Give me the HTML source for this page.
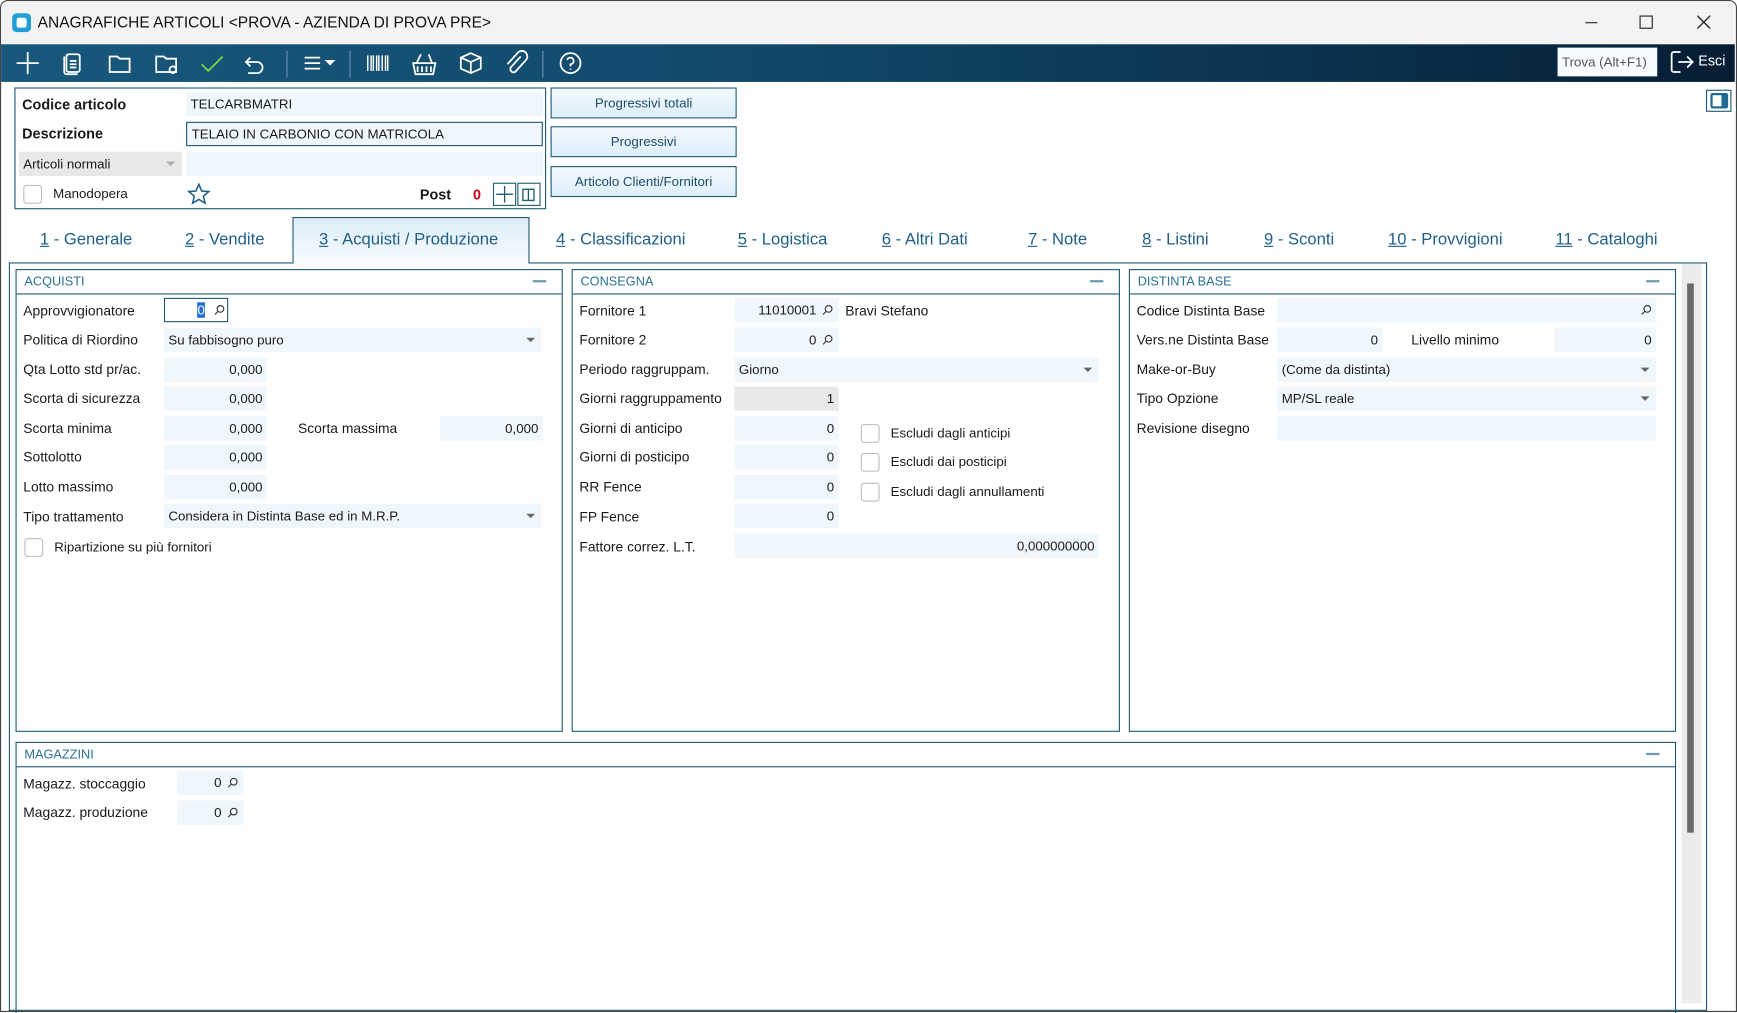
<!DOCTYPE html>
<html><head><meta charset="utf-8">
<style>
html,body{margin:0;padding:0;width:1737px;height:1012px;overflow:hidden;background:#fff;}
#w{position:absolute;left:0;top:0;width:1568px;height:914px;transform:scale(1.10778,1.10722);transform-origin:0 0;font-family:"Liberation Sans",sans-serif;color:#1a1a1a;font-size:13px;}
.a{position:absolute;}
.f{position:absolute;background:#eff7fc;height:22px;font-size:12px;line-height:22px;box-sizing:border-box;padding:0 4px;}
.r{text-align:right;}
.lbl{position:absolute;font-size:12.5px;line-height:16px;}
.pan{position:absolute;border:1px solid #1e5a73;box-sizing:border-box;}
.ph{position:absolute;left:0;right:0;top:0;height:21px;border-bottom:1px solid #1e5a73;color:#2a7196;font-size:11.5px;line-height:22px;padding-left:7px;}
.ph:after{content:"";position:absolute;right:14px;top:9px;width:12px;height:1.5px;background:#6a9ab5;}
.cb{position:absolute;width:15px;height:15px;border:1px solid #bdbdbd;border-radius:3px;background:#fff;}
.dd{position:absolute;right:6px;top:9px;width:0;height:0;border-left:4px solid transparent;border-right:4px solid transparent;border-top:4px solid #666;}
.btn{position:absolute;left:497px;width:168px;height:28px;box-sizing:border-box;border:1px solid #1e5a73;background:linear-gradient(#f4fafe,#dceefa);font-size:12px;color:#1e4d6b;text-align:center;line-height:26px;}
.tab{position:absolute;top:208px;font-size:15px;color:#1f5f8a;}
.tab u{text-decoration:underline;}
</style></head><body><div id="w">
<div class="a" style="left:0;top:0;width:1566px;height:912px;border:1px solid #444;border-radius:7px 7px 0 0;"></div>
<div class="a" style="left:1px;top:1px;width:1565px;height:39px;background:#f3f3f3;border-radius:7px 7px 0 0;"></div>
<div class="a" style="left:11px;top:12px;width:17px;height:17px;background:#1f9fd8;border-radius:4px;"></div>
<div class="a" style="left:15px;top:16px;width:9px;height:9px;background:#fff;border-radius:2px;"></div>
<div class="a" style="left:34px;top:12px;font-size:14px;color:#111;">ANAGRAFICHE ARTICOLI &lt;PROVA - AZIENDA DI PROVA PRE&gt;</div>
<div class="a" style="left:1431px;top:20px;width:11px;height:1px;background:#222;"></div>
<div class="a" style="left:1480px;top:14px;width:10px;height:10px;border:1px solid #222;"></div>
<svg class="a" style="left:1532px;top:14px" width="12" height="12"><path d="M0 0L12 12M12 0L0 12" stroke="#222" stroke-width="1.2"/></svg>
<div class="a" style="left:1px;top:40px;width:1565px;height:34px;background:linear-gradient(90deg,#17587c 0%,#124a6c 40%,#0a3350 75%,#071d33 100%);"></div>
<svg class="a" style="left:0;top:40px" width="540" height="34" fill="none" stroke="#fff" stroke-width="1.6">
<path d="M25 7V27M15 17H35"/>
<rect x="60" y="9" width="12" height="16" rx="2"/><path d="M58 11v14a2 2 0 0 0 2 2h10M63 15h6M63 18h6M63 21h6"/>
<path d="M99 11h7l2 2h9v12H99z"/>
<path d="M141 11h7l2 2h9v12h-18z"/><circle cx="156" cy="23" r="3"/>
<path d="M182 18l6 6 13-13" stroke="#7cd44a"/>
<path d="M226 12l-4 4 4 4M222 16h10a5 5 0 0 1 0 10h-8"/>
<path d="M259 6v24M316 6v24M490 6v24" stroke="#4d7c99"/>
<path d="M275 12h14M275 17h14M275 22h14"/><path d="M295 15l3 3 3-3z" fill="#fff"/>
<path d="M332 10v14M335 10v14M337 10v14M340 10v14M342 10v14M345 10v14M348 10v14M350 10v14" stroke-width="1.3"/>
<path d="M373 17h20l-2 10h-16zM376 17l4-8M390 17l-3-8M377 20v5M381 20v5M385 20v5M389 20v5"/>
<path d="M425 8l9 4v10l-9 4-9-4V12zM416 12l9 4 9-4M425 16v10"/>
<path d="M470 11l-9 10a3 3 0 0 0 4 4l10-11a5 5 0 0 0-7-7l-10 11"/>
<circle cx="515" cy="17" r="9"/><path d="M512 14a3 3 0 1 1 3 4v2M515 22v1"/>
</svg>
<div class="a" style="left:1406px;top:43px;width:90px;height:26px;background:#f7fbfe;font-size:12px;color:#555;line-height:26px;padding-left:4px;box-sizing:border-box;">Trova (Alt+F1)</div>
<svg class="a" style="left:1507px;top:45px" width="24" height="24" fill="none" stroke="#fff" stroke-width="1.6"><path d="M10 2H4a2 2 0 0 0-2 2v14a2 2 0 0 0 2 2h6M8 11h13M16 6l5 5-5 5"/></svg>
<div class="a" style="left:1533px;top:47px;font-size:13px;color:#fff;">Esci</div>
<div class="a" style="left:13px;top:79px;width:480px;height:110px;border:1px solid #1e5a73;box-sizing:border-box;"></div>
<div class="a" style="left:20px;top:87px;font-weight:bold;font-size:13px;">Codice articolo</div>
<div class="f" style="left:168px;top:83px;width:322px;">TELCARBMATRI</div>
<div class="a" style="left:20px;top:113px;font-weight:bold;font-size:13px;">Descrizione</div>
<div class="f" style="left:168px;top:110px;width:322px;border:1px solid #1e5a73;line-height:20px;">TELAIO IN CARBONIO CON MATRICOLA</div>
<div class="f" style="left:17px;top:137px;width:147px;background:#e8e8e8;">Articoli normali<span class="dd" style="border-top-color:#aaa"></span></div>
<div class="f" style="left:168px;top:137px;width:322px;"></div>
<div class="cb" style="left:21px;top:167px;"></div>
<div class="a" style="left:48px;top:168px;font-size:12px;">Manodopera</div>
<svg class="a" style="left:169px;top:165px" width="21" height="20"><path d="M10.5 1.5l2.6 6 6.4.5-4.9 4.2 1.5 6.3-5.6-3.4-5.6 3.4 1.5-6.3L1.5 8l6.4-.5z" fill="none" stroke="#1f5f8a" stroke-width="1.4"/></svg>
<div class="a" style="left:379px;top:168px;font-weight:bold;font-size:13px;">Post</div>
<div class="a" style="left:427px;top:168px;font-weight:bold;font-size:13px;color:#d0021b;">0</div>
<div class="a" style="left:445px;top:165px;width:21px;height:21px;border:1px solid #1e5a73;box-sizing:border-box;"></div>
<div class="a" style="left:467px;top:165px;width:21px;height:21px;border:1px solid #1e5a73;box-sizing:border-box;"></div>
<svg class="a" style="left:445px;top:165px" width="44" height="21" fill="none" stroke="#1e5a73" stroke-width="1.2"><path d="M10.5 3v15M3 10.5h15"/><path d="M27 6h5v10h-5zM32 6h5v10h-5z"/></svg>
<div class="btn" style="top:79px;">Progressivi totali</div>
<div class="btn" style="top:114px;">Progressivi</div>
<div class="btn" style="top:150px;">Articolo Clienti/Fornitori</div>
<div class="a" style="left:1540px;top:81px;width:23px;height:20px;border:1px solid #1e5a73;box-sizing:border-box;"></div>
<div class="a" style="left:1544px;top:84px;width:16px;height:14px;border-radius:2px;background:#1f6a94;"></div>
<div class="a" style="left:1546px;top:86px;width:8px;height:10px;background:#fff;"></div>
<div class="a" style="left:264px;top:196px;width:214px;height:42px;border:1px solid #1e5a73;border-bottom:none;box-sizing:border-box;background:linear-gradient(#dcedf8,#f7fbfe);"></div>
<div class="a" style="left:8px;top:237px;width:256px;height:1px;background:#1e5a73;"></div>
<div class="a" style="left:478px;top:237px;width:1063px;height:1px;background:#1e5a73;"></div>
<div class="a" style="left:8px;top:237px;width:1533px;height:676px;border:1px solid #1e5a73;border-top:none;box-sizing:border-box;"></div>
<div class="tab" style="left:36px;"><u>1</u> - Generale</div>
<div class="tab" style="left:167px;"><u>2</u> - Vendite</div>
<div class="tab" style="left:288px;"><u>3</u> - Acquisti / Produzione</div>
<div class="tab" style="left:502px;"><u>4</u> - Classificazioni</div>
<div class="tab" style="left:666px;"><u>5</u> - Logistica</div>
<div class="tab" style="left:796px;"><u>6</u> - Altri Dati</div>
<div class="tab" style="left:928px;"><u>7</u> - Note</div>
<div class="tab" style="left:1031px;"><u>8</u> - Listini</div>
<div class="tab" style="left:1141px;"><u>9</u> - Sconti</div>
<div class="tab" style="left:1253px;"><u>10</u> - Provvigioni</div>
<div class="tab" style="left:1404px;"><u>11</u> - Cataloghi</div>
<div class="a" style="left:1518px;top:238px;width:18px;height:668px;background:#ececec;"></div>
<div class="a" style="left:1523px;top:256px;width:6px;height:496px;background:#6a6a6a;"></div>
<div class="pan" style="left:14px;top:243px;width:494px;height:418px;"><div class="ph">ACQUISTI</div></div>
<div class="lbl" style="left:21px;top:273px;">Approvvigionatore</div>
<div class="f r" style="left:148px;top:269px;width:58px;border:1px solid #1e5a73;background:#fff;padding-right:20px;line-height:20px;"><span style="background:#1f6fd0;color:#fff;">0</span></div>
<svg class="a" style="left:193px;top:275px" width="10" height="10"><circle cx="6" cy="4" r="3" fill="none" stroke="#333"/><path d="M4 6L1 9" stroke="#333"/></svg>
<div class="lbl" style="left:21px;top:299px;">Politica di Riordino</div>
<div class="f" style="left:148px;top:296px;width:341px;">Su fabbisogno puro<span class="dd"></span></div>
<div class="lbl" style="left:21px;top:326px;">Qta Lotto std pr/ac.</div>
<div class="f r" style="left:148px;top:323px;width:93px;">0,000</div>
<div class="lbl" style="left:21px;top:352px;">Scorta di sicurezza</div>
<div class="f r" style="left:148px;top:349px;width:93px;">0,000</div>
<div class="lbl" style="left:21px;top:379px;">Scorta minima</div>
<div class="f r" style="left:148px;top:376px;width:93px;">0,000</div>
<div class="lbl" style="left:269px;top:379px;">Scorta massima</div>
<div class="f r" style="left:397px;top:376px;width:93px;">0,000</div>
<div class="lbl" style="left:21px;top:405px;">Sottolotto</div>
<div class="f r" style="left:148px;top:402px;width:93px;">0,000</div>
<div class="lbl" style="left:21px;top:432px;">Lotto massimo</div>
<div class="f r" style="left:148px;top:429px;width:93px;">0,000</div>
<div class="lbl" style="left:21px;top:459px;">Tipo trattamento</div>
<div class="f" style="left:148px;top:455px;width:341px;">Considera in Distinta Base ed in M.R.P.<span class="dd"></span></div>
<div class="cb" style="left:22px;top:486px;"></div>
<div class="a" style="left:49px;top:487px;font-size:12px;">Ripartizione su più fornitori</div>
<div class="pan" style="left:516px;top:243px;width:495px;height:418px;"><div class="ph">CONSEGNA</div></div>
<div class="lbl" style="left:523px;top:273px;">Fornitore 1</div>
<div class="f r" style="left:663px;top:269px;width:94px;padding-right:20px;">11010001</div>
<div class="lbl" style="left:763px;top:273px;">Bravi Stefano</div>
<div class="lbl" style="left:523px;top:299px;">Fornitore 2</div>
<div class="f r" style="left:663px;top:296px;width:94px;padding-right:20px;">0</div>
<svg class="a" style="left:742px;top:275px" width="10" height="40"><g fill="none" stroke="#333"><circle cx="6" cy="4" r="3"/><path d="M4 6L1 9"/><circle cx="6" cy="31" r="3"/><path d="M4 33L1 36"/></g></svg>
<div class="lbl" style="left:523px;top:326px;">Periodo raggruppam.</div>
<div class="f" style="left:663px;top:323px;width:329px;">Giorno<span class="dd"></span></div>
<div class="lbl" style="left:523px;top:352px;">Giorni raggruppamento</div>
<div class="f r" style="left:663px;top:349px;width:94px;background:#e8e8e8;">1</div>
<div class="lbl" style="left:523px;top:379px;">Giorni di anticipo</div>
<div class="f r" style="left:663px;top:376px;width:94px;">0</div>
<div class="lbl" style="left:523px;top:405px;">Giorni di posticipo</div>
<div class="f r" style="left:663px;top:402px;width:94px;">0</div>
<div class="lbl" style="left:523px;top:432px;">RR Fence</div>
<div class="f r" style="left:663px;top:429px;width:94px;">0</div>
<div class="lbl" style="left:523px;top:459px;">FP Fence</div>
<div class="f r" style="left:663px;top:455px;width:94px;">0</div>
<div class="lbl" style="left:523px;top:486px;">Fattore correz. L.T.</div>
<div class="f r" style="left:663px;top:482px;width:329px;">0,000000000</div>
<div class="cb" style="left:777px;top:383px;"></div>
<div class="a" style="left:804px;top:384px;font-size:12px;">Escludi dagli anticipi</div>
<div class="cb" style="left:777px;top:409px;"></div>
<div class="a" style="left:804px;top:410px;font-size:12px;">Escludi dai posticipi</div>
<div class="cb" style="left:777px;top:436px;"></div>
<div class="a" style="left:804px;top:437px;font-size:12px;">Escludi dagli annullamenti</div>
<div class="pan" style="left:1019px;top:243px;width:494px;height:418px;"><div class="ph">DISTINTA BASE</div></div>
<div class="lbl" style="left:1026px;top:273px;">Codice Distinta Base</div>
<div class="f" style="left:1153px;top:269px;width:342px;"></div>
<svg class="a" style="left:1481px;top:275px" width="10" height="10"><circle cx="6" cy="4" r="3" fill="none" stroke="#333"/><path d="M4 6L1 9" stroke="#333"/></svg>
<div class="lbl" style="left:1026px;top:299px;">Vers.ne Distinta Base</div>
<div class="f r" style="left:1153px;top:296px;width:95px;">0</div>
<div class="lbl" style="left:1274px;top:299px;">Livello minimo</div>
<div class="f r" style="left:1403px;top:296px;width:92px;">0</div>
<div class="lbl" style="left:1026px;top:326px;">Make-or-Buy</div>
<div class="f" style="left:1153px;top:323px;width:342px;">(Come da distinta)<span class="dd"></span></div>
<div class="lbl" style="left:1026px;top:352px;">Tipo Opzione</div>
<div class="f" style="left:1153px;top:349px;width:342px;">MP/SL reale<span class="dd"></span></div>
<div class="lbl" style="left:1026px;top:379px;">Revisione disegno</div>
<div class="f" style="left:1153px;top:376px;width:342px;"></div>
<div class="pan" style="left:14px;top:670px;width:1499px;height:245px;border-bottom:none;"><div class="ph">MAGAZZINI</div></div>
<div class="lbl" style="left:21px;top:700px;">Magazz. stoccaggio</div>
<div class="f r" style="left:160px;top:696px;width:60px;padding-right:20px;">0</div>
<div class="lbl" style="left:21px;top:726px;">Magazz. produzione</div>
<div class="f r" style="left:160px;top:723px;width:60px;padding-right:20px;">0</div>
<svg class="a" style="left:205px;top:702px" width="10" height="40"><g fill="none" stroke="#333"><circle cx="6" cy="4" r="3"/><path d="M4 6L1 9"/><circle cx="6" cy="31" r="3"/><path d="M4 33L1 36"/></g></svg>
</div></body></html>
